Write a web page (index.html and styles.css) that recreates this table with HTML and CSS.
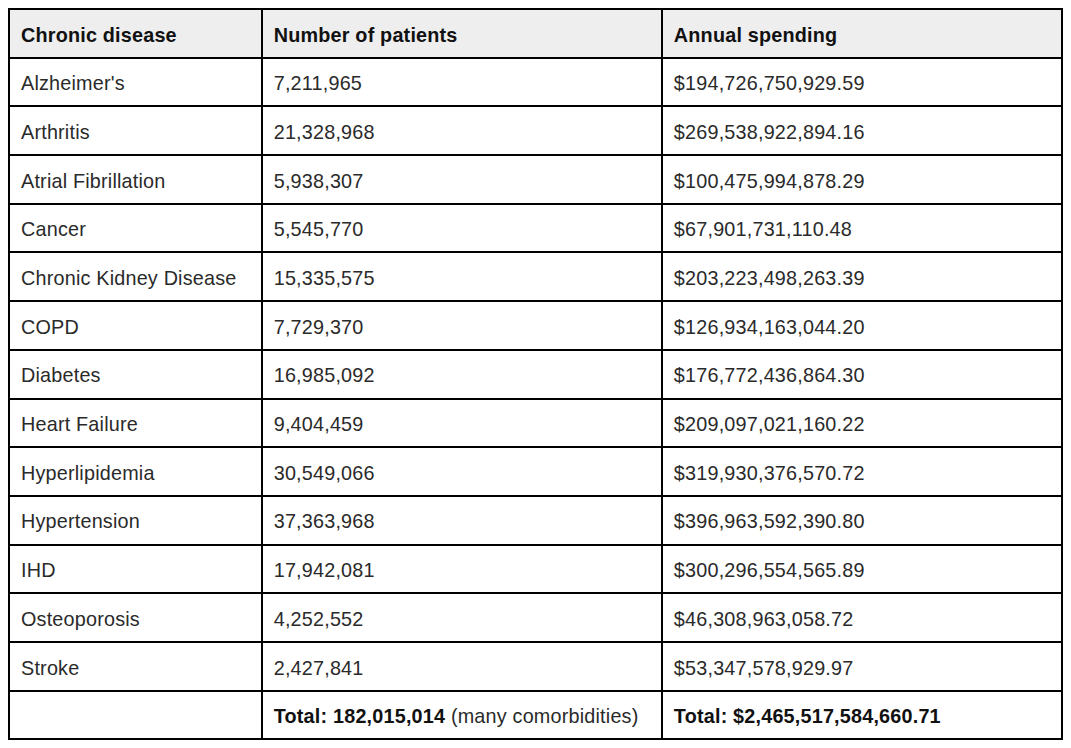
FILE: index.html
```html
<!DOCTYPE html>
<html>
<head>
<meta charset="utf-8">
<link rel="stylesheet" href="styles.css">
</head>
<body>
<table class="data">
  <colgroup>
    <col class="c1"><col class="c2"><col class="c3">
  </colgroup>
  <thead>
    <tr><th>Chronic disease</th><th>Number of patients</th><th>Annual spending</th></tr>
  </thead>
  <tbody>
    <tr><td>Alzheimer's</td><td>7,211,965</td><td>$194,726,750,929.59</td></tr>
    <tr><td>Arthritis</td><td>21,328,968</td><td>$269,538,922,894.16</td></tr>
    <tr><td>Atrial Fibrillation</td><td>5,938,307</td><td>$100,475,994,878.29</td></tr>
    <tr><td>Cancer</td><td>5,545,770</td><td>$67,901,731,110.48</td></tr>
    <tr><td>Chronic Kidney Disease</td><td>15,335,575</td><td>$203,223,498,263.39</td></tr>
    <tr><td>COPD</td><td>7,729,370</td><td>$126,934,163,044.20</td></tr>
    <tr><td>Diabetes</td><td>16,985,092</td><td>$176,772,436,864.30</td></tr>
    <tr><td>Heart Failure</td><td>9,404,459</td><td>$209,097,021,160.22</td></tr>
    <tr><td>Hyperlipidemia</td><td>30,549,066</td><td>$319,930,376,570.72</td></tr>
    <tr><td>Hypertension</td><td>37,363,968</td><td>$396,963,592,390.80</td></tr>
    <tr><td>IHD</td><td>17,942,081</td><td>$300,296,554,565.89</td></tr>
    <tr><td>Osteoporosis</td><td>4,252,552</td><td>$46,308,963,058.72</td></tr>
    <tr><td>Stroke</td><td>2,427,841</td><td>$53,347,578,929.97</td></tr>
    <tr><td></td><td><b>Total: 182,015,014</b> (many comorbidities)</td><td><b>Total: $2,465,517,584,660.71</b></td></tr>
  </tbody>
</table>
</body>
</html>
```

FILE: styles.css
```css
body {
  margin: 8px;
  background: #fff;
  font-family: "Liberation Sans", Arial, sans-serif;
  color: #2a2a2a;
}
.data {
  width: 100%;
  border-collapse: collapse;
  border: 2px solid #000;
  font-size: 19.8px;
  letter-spacing: 0.2px;
  line-height: 22px;
}
.c1 { width: 24%; }
.c2 { width: 38%; }
.c3 { width: 38%; }
.data th,
.data td {
  border: 2px solid #000;
  padding: 13.6px 10px 11.1px 11px;
  text-align: left;
  vertical-align: middle;
}
.data th {
  background: #eee;
  font-weight: bold;
  color: #111;
}
.data b {
  font-weight: bold;
  color: #111;
}
```
